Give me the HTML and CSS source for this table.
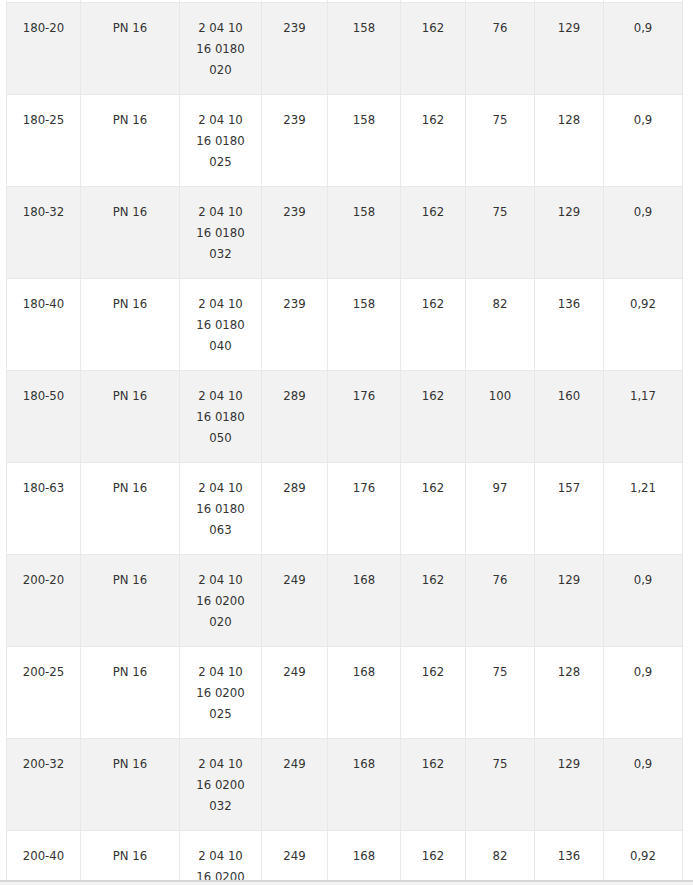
FILE: index.html
```html
<!DOCTYPE html>
<html>
<head>
<meta charset="utf-8">
<link rel="stylesheet" href="styles.css">
</head>
<body>
<div class="viewport">
<table class="spec">
<colgroup>
<col class="c1"><col class="c2"><col class="c3"><col class="c4"><col class="c5"><col class="c6"><col class="c7"><col class="c8"><col class="c9">
</colgroup>
<tbody>
<tr class="lead"><td></td><td></td><td></td><td></td><td></td><td></td><td></td><td></td><td></td></tr>
<tr class="alt"><td>180-20</td><td>PN 16</td><td>2 04 10<br>16 0180<br>020</td><td>239</td><td>158</td><td>162</td><td>76</td><td>129</td><td>0,9</td></tr>
<tr><td>180-25</td><td>PN 16</td><td>2 04 10<br>16 0180<br>025</td><td>239</td><td>158</td><td>162</td><td>75</td><td>128</td><td>0,9</td></tr>
<tr class="alt"><td>180-32</td><td>PN 16</td><td>2 04 10<br>16 0180<br>032</td><td>239</td><td>158</td><td>162</td><td>75</td><td>129</td><td>0,9</td></tr>
<tr><td>180-40</td><td>PN 16</td><td>2 04 10<br>16 0180<br>040</td><td>239</td><td>158</td><td>162</td><td>82</td><td>136</td><td>0,92</td></tr>
<tr class="alt"><td>180-50</td><td>PN 16</td><td>2 04 10<br>16 0180<br>050</td><td>289</td><td>176</td><td>162</td><td>100</td><td>160</td><td>1,17</td></tr>
<tr><td>180-63</td><td>PN 16</td><td>2 04 10<br>16 0180<br>063</td><td>289</td><td>176</td><td>162</td><td>97</td><td>157</td><td>1,21</td></tr>
<tr class="alt"><td>200-20</td><td>PN 16</td><td>2 04 10<br>16 0200<br>020</td><td>249</td><td>168</td><td>162</td><td>76</td><td>129</td><td>0,9</td></tr>
<tr><td>200-25</td><td>PN 16</td><td>2 04 10<br>16 0200<br>025</td><td>249</td><td>168</td><td>162</td><td>75</td><td>128</td><td>0,9</td></tr>
<tr class="alt"><td>200-32</td><td>PN 16</td><td>2 04 10<br>16 0200<br>032</td><td>249</td><td>168</td><td>162</td><td>75</td><td>129</td><td>0,9</td></tr>
<tr><td>200-40</td><td>PN 16</td><td>2 04 10<br>16 0200<br>040</td><td>249</td><td>168</td><td>162</td><td>82</td><td>136</td><td>0,92</td></tr>
</tbody>
</table>
</div>
<div class="hbar"></div>
</body>
</html>
```
FILE: styles.css
```css
html, body {
  margin: 0;
  padding: 0;
  background: #ffffff;
}
body {
  font-family: "DejaVu Sans Condensed", "DejaVu Sans", sans-serif;
  font-size: 13px;
  color: #333333;
}
.viewport {
  height: 880px;
  overflow: hidden;
  padding-left: 6px;
}
.spec {
  border-collapse: collapse;
  table-layout: fixed;
  width: 677px;
  margin-top: -90px;
}
.c1 { width: 74px; }
.c2 { width: 99px; }
.c3 { width: 82px; }
.c4 { width: 66px; }
.c5 { width: 73px; }
.c6 { width: 65px; }
.c7 { width: 69px; }
.c8 { width: 69px; }
.c9 { width: 79px; }
.spec td {
  border: 1px solid #e8e8e8;
  padding: 14px 4px 14px 4px;
  line-height: 21px;
  height: 63px;
  text-align: center;
  vertical-align: top;
}
.spec tr.alt td {
  background: #f2f2f2;
}
.hbar {
  height: 5px;
  border-top: 2px solid #d6d6d6;
  background: #f3f3f3;
  box-sizing: border-box;
}
```
